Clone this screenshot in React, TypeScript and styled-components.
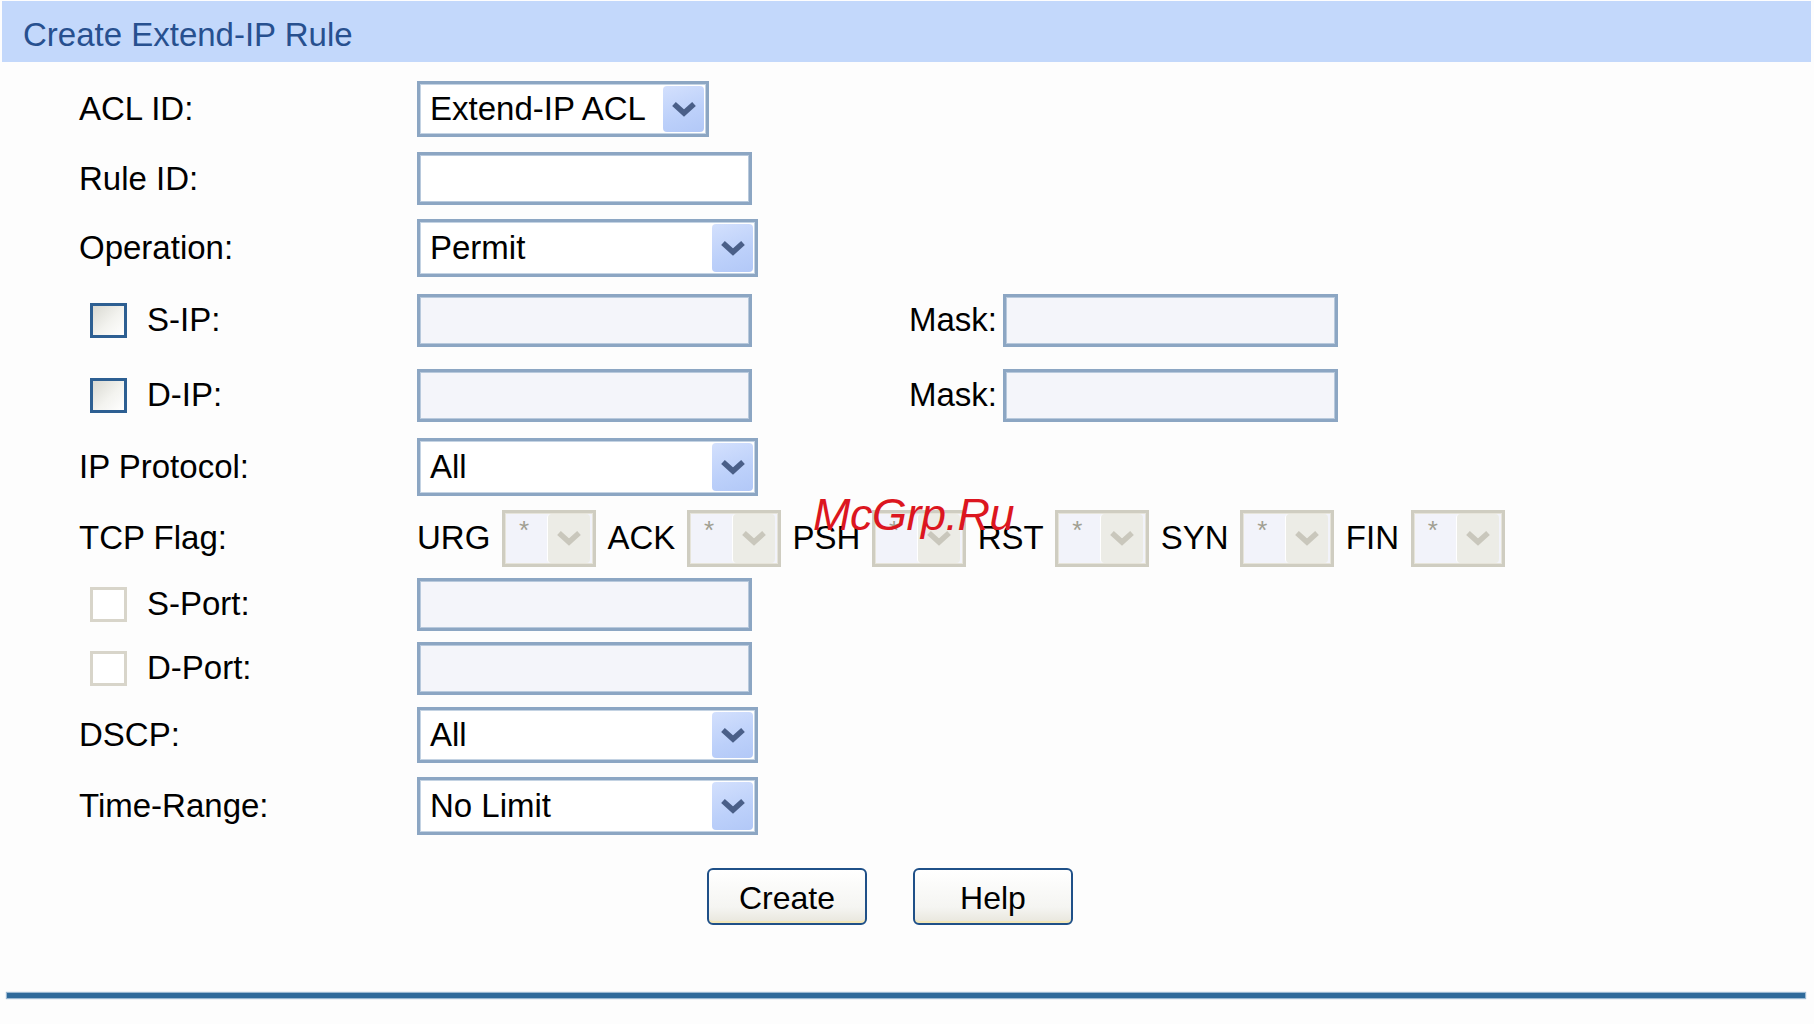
import React from 'react';
import styled, { createGlobalStyle } from 'styled-components';

// Global
const GlobalStyle = createGlobalStyle`
  html, body {
    margin: 0;
    padding: 0;
    background: #ffffff;
  }
  body {
    font-family: "Liberation Sans", Arial, sans-serif;
    color: #000;
  }
`;

// Styles
const Page = styled.div`
  position: relative;
  width: 1814px;
  height: 1024px;
  overflow: hidden;
  background: #fdfdfd;
`;

const Header = styled.div`
  margin: 1px 3px 0 2px;
  height: 61px;
  background-color: #c3d8fb;
  display: flex;
  align-items: center;
  padding: 6px 0 0 21px;
  box-sizing: border-box;

  & h1 {
    margin: 0;
    font-size: 33px;
    font-weight: normal;
    color: #27508f;
  }
`;

const Form = styled.div`
  padding: 12px 0 0 79px;
`;

const Row = styled.div<{ $h: number }>`
  display: flex;
  align-items: center;
  height: ${(p) => p.$h}px;
`;

const LabelCell = styled.div<{ $check?: boolean }>`
  width: ${(p) => (p.$check ? 327 : 338)}px;
  padding-left: ${(p) => (p.$check ? 11 : 0)}px;
  flex-shrink: 0;
  display: flex;
  align-items: center;
  gap: 20px;
  font-size: 33px;
`;

const Text = styled.span`
  font-size: 33px;
  white-space: nowrap;
`;

const Checkbox = styled.span<{ $disabled?: boolean }>`
  box-sizing: border-box;
  width: 37px;
  height: 35px;
  border: 3px solid ${(p) => (p.$disabled ? '#d8d5ca' : '#2d5f92')};
  background: ${(p) =>
    p.$disabled ? '#ffffff' : 'linear-gradient(135deg, #d9d9d2 0%, #f3f3ef 55%, #ffffff 100%)'};
`;

const TextInput = styled.div<{ $filled?: boolean }>`
  box-sizing: border-box;
  width: 335px;
  height: 53px;
  border: 3px solid #8ca6c3;
  box-shadow: inset 0 0 0 1px #b8c9dc;
  background: ${(p) => (p.$filled ? '#f4f5fa' : '#ffffff')};
`;

const MaskGroup = styled.div`
  display: flex;
  align-items: center;
  gap: 6px;
  margin-left: 157px;
`;

const Select = styled.div<{ $w: number; $h: number }>`
  box-sizing: border-box;
  width: ${(p) => p.$w}px;
  height: ${(p) => p.$h}px;
  border: 3px solid #8ca6c3;
  box-shadow: inset 0 0 0 1px #c4d3e3;
  background: #ffffff;
  display: flex;
  align-items: stretch;
`;

const SelectValue = styled.span`
  flex: 1;
  display: flex;
  align-items: center;
  padding-left: 10px;
  font-size: 33px;
  white-space: nowrap;
`;

const DropButton = styled.span`
  width: 41px;
  margin: 2px 2px 2px 0;
  border-radius: 4px;
  background: linear-gradient(160deg, #d3e0fd 0%, #bcd0fa 60%, #b2c8f7 100%);
  display: flex;
  align-items: center;
  justify-content: center;
`;

const FlagGroup = styled.div`
  display: flex;
  align-items: center;
  gap: 11.6px;
`;

const FlagSelect = styled.div`
  box-sizing: border-box;
  width: 94px;
  height: 57px;
  border: 3px solid #cfcdc1;
  box-shadow: inset 0 0 0 1px #e6e4da;
  background: #f2f3fa;
  display: flex;
  align-items: stretch;
`;

const FlagValue = styled.span`
  flex: 1;
  padding: 4px 0 0 14px;
  font-size: 26px;
  line-height: 1;
  color: #a19f92;
`;

const FlagButton = styled.span`
  width: 42px;
  margin: 1px 3px 1px 0;
  border-radius: 4px;
  background: #ecece6;
  border-left: 1px solid #ffffff;
  display: flex;
  align-items: center;
  justify-content: center;
`;

const ButtonRow = styled.div`
  display: flex;
  gap: 46px;
  padding-left: 628px;
  margin-top: 23px;
`;

const Button = styled.button`
  box-sizing: border-box;
  width: 160px;
  height: 57px;
  border: 2px solid #1f5088;
  border-radius: 6px;
  background: linear-gradient(180deg, #ffffff 0%, #f5f5f2 70%, #e8e6dc 100%);
  box-shadow: inset 0 -3px 0 -1px #f3e7b8;
  font-family: "Liberation Sans", Arial, sans-serif;
  font-size: 32px;
  color: #000;
  padding: 4px 0 0;
`;

const BottomLine = styled.div`
  margin: 68px 9px 0 7px;
  height: 5px;
  background: #2f6a9b;
  box-shadow: 0 0 1px 1px #9ab8d2;
`;

const Watermark = styled.span`
  position: absolute;
  left: 813px;
  top: 489px;
  font-size: 45px;
  font-style: italic;
  color: #dc1620;
  letter-spacing: -0.5px;
  pointer-events: none;
`;

const Chevron: React.FC<{ color: string }> = ({ color }) => (
  <svg width="26" height="18" viewBox="0 0 26 18">
    <polyline points="3,4 13,13 23,4" fill="none" stroke={color} strokeWidth="5.5" />
  </svg>
);

const Drop: React.FC<{ value: string; w: number; h: number }> = ({ value, w, h }) => (
  <Select $w={w} $h={h}>
    <SelectValue>{value}</SelectValue>
    <DropButton>
      <Chevron color="#4a5f88" />
    </DropButton>
  </Select>
);

const Flag: React.FC<{ name: string }> = ({ name }) => (
  <>
    <Text>{name}</Text>
    <FlagSelect>
      <FlagValue>*</FlagValue>
      <FlagButton>
        <Chevron color="#c9c7bc" />
      </FlagButton>
    </FlagSelect>
  </>
);

/* Main Component */

export default function App() {
  return (
    <Page>
      <GlobalStyle />
      <Header>
        <h1>Create Extend-IP Rule</h1>
      </Header>
      <Form>
        <Row $h={70}>
          <LabelCell>ACL ID:</LabelCell>
          <Drop value="Extend-IP ACL" w={292} h={56} />
        </Row>
        <Row $h={69}>
          <LabelCell>Rule ID:</LabelCell>
          <TextInput />
        </Row>
        <Row $h={70}>
          <LabelCell>Operation:</LabelCell>
          <Drop value="Permit" w={341} h={58} />
        </Row>
        <Row $h={74}>
          <LabelCell $check>
            <Checkbox />
            S-IP:
          </LabelCell>
          <TextInput $filled />
          <MaskGroup>
            <Text>Mask:</Text>
            <TextInput $filled />
          </MaskGroup>
        </Row>
        <Row $h={76}>
          <LabelCell $check>
            <Checkbox />
            D-IP:
          </LabelCell>
          <TextInput $filled />
          <MaskGroup>
            <Text>Mask:</Text>
            <TextInput $filled />
          </MaskGroup>
        </Row>
        <Row $h={68}>
          <LabelCell>IP Protocol:</LabelCell>
          <Drop value="All" w={341} h={58} />
        </Row>
        <Row $h={74}>
          <LabelCell>TCP Flag:</LabelCell>
          <FlagGroup>
            <Flag name="URG" />
            <Flag name="ACK" />
            <Flag name="PSH" />
            <Flag name="RST" />
            <Flag name="SYN" />
            <Flag name="FIN" />
          </FlagGroup>
        </Row>
        <Row $h={58}>
          <LabelCell $check>
            <Checkbox $disabled />
            S-Port:
          </LabelCell>
          <TextInput $filled />
        </Row>
        <Row $h={70}>
          <LabelCell $check>
            <Checkbox $disabled />
            D-Port:
          </LabelCell>
          <TextInput $filled />
        </Row>
        <Row $h={64}>
          <LabelCell>DSCP:</LabelCell>
          <Drop value="All" w={341} h={56} />
        </Row>
        <Row $h={78}>
          <LabelCell>Time-Range:</LabelCell>
          <Drop value="No Limit" w={341} h={58} />
        </Row>
        <ButtonRow>
          <Button>Create</Button>
          <Button>Help</Button>
        </ButtonRow>
      </Form>
      <BottomLine />
      <Watermark>McGrp.Ru</Watermark>
    </Page>
  );
}
